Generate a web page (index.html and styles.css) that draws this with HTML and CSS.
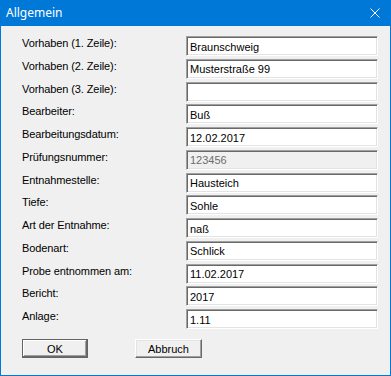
FILE: index.html
```html
<!DOCTYPE html>
<html lang="de">
<head>
  <meta charset="UTF-8" />
  <title>Allgemein</title>
  <link rel="stylesheet" href="styles.css">
</head>
<body>
  <div class="dialog">
    <div class="titlebar">
      <span class="title">Allgemein</span>
      <svg class="close" width="10" height="10" viewBox="0 0 10 10">
        <path d="M0.5 0.5 L9.5 9.5 M9.5 0.5 L0.5 9.5" stroke="#fff" stroke-width="1" fill="none" />
      </svg>
    </div>

    <div class="content">
      <form class="fields" onsubmit="return false;">
        <label for="z1">Vorhaben (1. Zeile):</label>
        <input type="text" id="z1" value="Braunschweig" />

        <label for="z2">Vorhaben (2. Zeile):</label>
        <input type="text" id="z2" value="Musterstraße 99" />

        <label for="z3">Vorhaben (3. Zeile):</label>
        <input type="text" id="z3" value="" />

        <label for="bearb">Bearbeiter:</label>
        <input type="text" id="bearb" value="Buß" />

        <label for="datum">Bearbeitungsdatum:</label>
        <input type="text" id="datum" value="12.02.2017" />

        <label for="nr">Prüfungsnummer:</label>
        <input type="text" id="nr" value="123456" disabled />

        <label for="stelle">Entnahmestelle:</label>
        <input type="text" id="stelle" value="Hausteich" />

        <label for="tiefe">Tiefe:</label>
        <input type="text" id="tiefe" value="Sohle" />

        <label for="art">Art der Entnahme:</label>
        <input type="text" id="art" value="naß" />

        <label for="boden">Bodenart:</label>
        <input type="text" id="boden" value="Schlick" />

        <label for="probe">Probe entnommen am:</label>
        <input type="text" id="probe" value="11.02.2017" />

        <label for="bericht">Bericht:</label>
        <input type="text" id="bericht" value="2017" />

        <label for="anlage">Anlage:</label>
        <input type="text" id="anlage" value="1.11" />
      </form>

      <div class="buttons">
        <button type="button" class="default">OK</button>
        <button type="button">Abbruch</button>
      </div>
    </div>
  </div>
</body>
</html>
```

FILE: styles.css
```css
* {
  margin: 0;
  padding: 0;
  box-sizing: border-box;
}

body {
  font-family: 'Liberation Sans', Arial, sans-serif;
  font-size: 11px;
  color: #000;
  background: #f0f0f0;
}

.dialog {
  width: 391px;
  height: 376px;
  background: #f0f0f0;
  border: 1px solid #0078d7;
  border-top: none;
}

.titlebar {
  height: 26px;
  margin: 0 -1px;
  background: #0078d7;
  color: #fff;
  display: flex;
  align-items: center;
  justify-content: space-between;
  padding: 0 11px 1px 6px;
}

.title {
  font-family: 'Noto Sans', sans-serif;
  font-size: 12px;
}

.close {
  display: block;
}

.content {
  padding: 10px 0 0 21px;
}

.fields {
  display: grid;
  grid-template-columns: 164px 192px;
  grid-auto-rows: 20px;
  row-gap: 2.75px;
}

label {
  padding-top: 1px;
  white-space: nowrap;
  letter-spacing: -0.1px;
}

input {
  width: 100%;
  height: 20px;
  font-family: inherit;
  font-size: 11px;
  color: #000;
  background: #fff;
  border-top: 1px solid #a0a0a0;
  border-left: 1px solid #a0a0a0;
  border-right: 1px solid #fff;
  border-bottom: 1px solid #fff;
  box-shadow: inset 1px 1px 0 #696969, inset -1px -1px 0 #e3e3e3;
  padding: 1px 2px 0 3px;
  outline: none;
}

input:disabled {
  background: #f0f0f0;
  color: #6d6d6d;
}

.buttons {
  display: flex;
  gap: 47px;
  margin-top: 10px;
}

button {
  width: 66px;
  height: 19px;
  font-family: inherit;
  font-size: 11px;
  color: #000;
  background: #f0f0f0;
  border-top: 1px solid #fff;
  border-left: 1px solid #fff;
  border-right: 1px solid #696969;
  border-bottom: 1px solid #696969;
  box-shadow: inset -1px -1px 0 #a0a0a0, inset 1px 1px 0 #e3e3e3;
}

button + button {
  width: 67px;
}

.default {
  border: 1px solid #646464;
  box-shadow: inset -1px -1px 0 #696969, inset 1px 1px 0 #fff, inset -2px -2px 0 #a0a0a0;
}
```
